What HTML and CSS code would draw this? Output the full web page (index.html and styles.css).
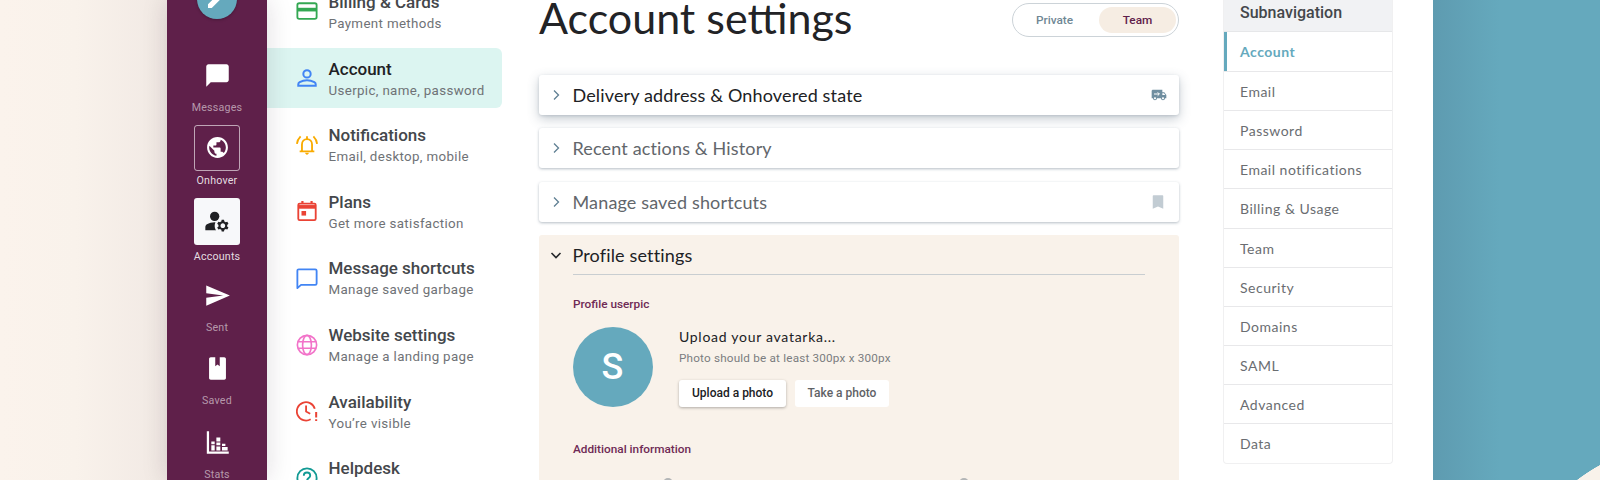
FILE: index.html
```html
<!DOCTYPE html>
<html lang="en">
<head>
    <meta charset="UTF-8">
    <meta name="viewport" content="width=device-width, initial-scale=1.0">
    <title>Account settings</title>
    <link rel="stylesheet" href="styles.css">
</head>
<body>
    <div class="backdrop"></div>

    <nav class="rail">
        <div class="fab">
            <svg viewBox="0 0 24 24" width="24" height="24"><path d="M3 17.25V21h3.75L17.81 9.94l-3.75-3.75L3 17.25zM20.71 7.04c.39-.39.39-1.02 0-1.41l-2.34-2.34c-.39-.39-1.02-.39-1.41 0l-1.83 1.83 3.75 3.75 1.83-1.83z"/></svg>
        </div>
        <div class="rail-item">
            <div class="rail-box">
                <svg viewBox="0 0 24 24" width="27" height="27"><path d="M20 2H4c-1.1 0-2 .9-2 2v18l4-4h14c1.1 0 2-.9 2-2V4c0-1.1-.9-2-2-2z"/></svg>
            </div>
            <span>Messages</span>
        </div>
        <div class="rail-item hover">
            <div class="rail-box">
                <svg viewBox="0 0 24 24" width="25" height="25"><path d="M12 2C6.48 2 2 6.48 2 12s4.48 10 10 10 10-4.48 10-10S17.52 2 12 2zm-1 17.93c-3.95-.49-7-3.85-7-7.93 0-.62.08-1.21.21-1.79L9 15v1c0 1.1.9 2 2 2v1.93zm6.9-2.54c-.26-.81-1-1.39-1.9-1.39h-1v-3c0-.55-.45-1-1-1H8v-2h2c.55 0 1-.45 1-1V7h2c1.1 0 2-.9 2-2v-.41c2.93 1.19 5 4.06 5 7.41 0 2.08-.8 3.97-2.1 5.39z"/></svg>
            </div>
            <span>Onhover</span>
        </div>
        <div class="rail-item active">
            <div class="rail-box">
                <svg viewBox="0 0 24 24" width="28" height="28"><path d="M10 12a4 4 0 1 0 0-8 4 4 0 0 0 0 8z"/><path d="M10.67 13.02C10.45 13.01 10.23 13 10 13c-2.42 0-4.68.67-6.61 1.82C2.51 15.34 2 16.32 2 17.35V20h9.26c-.79-1.13-1.26-2.51-1.26-4 0-1.07.25-2.07.67-2.98z"/><path d="M20.75 16c0-.22-.03-.42-.06-.63l1.14-1.01-1-1.73-1.45.49c-.32-.27-.68-.48-1.08-.63L18 11h-2l-.3 1.49c-.4.15-.76.36-1.08.63l-1.45-.49-1 1.73 1.14 1.01c-.03.21-.06.41-.06.63s.03.42.06.63l-1.14 1.01 1 1.73 1.45-.49c.32.27.68.48 1.08.63L16 21h2l.3-1.49c.4-.15.76-.36 1.08-.63l1.45.49 1-1.73-1.14-1.01c.03-.21.06-.41.06-.63zM17 18c-1.1 0-2-.9-2-2s.9-2 2-2 2 .9 2 2-.9 2-2 2z"/></svg>
            </div>
            <span>Accounts</span>
        </div>
        <div class="rail-item">
            <div class="rail-box">
                <svg viewBox="0 0 24 24" width="27" height="27"><path d="M2.01 21L23 12 2.01 3 2 10l15 2-15 2z"/></svg>
            </div>
            <span>Sent</span>
        </div>
        <div class="rail-item">
            <div class="rail-box">
                <svg viewBox="0 0 24 24" width="27" height="27"><path d="M6 2h4v8l2-1.6 2 1.6V2h4c.8 0 1.5.7 1.5 1.5v17c0 .8-.7 1.5-1.5 1.5H6c-.8 0-1.5-.7-1.5-1.5v-17C4.500 2.700 5.200 2 6 2z"/></svg>
            </div>
            <span>Saved</span>
        </div>
        <div class="rail-item">
            <div class="rail-box">
                <svg viewBox="0 0 24 24" width="27" height="27"><path d="M2.500 2H4.500V20H22V22H2.500zM6.500 11h3v2.500h-3zM6.500 14.500h3V19h-3zM11 7.500h3.500V11H11zM11 12h3.500v2.500H11zM11 15.500h3.500V19H11zM16 13h3v2h-3zM16 16h5v3h-5z"/></svg>
            </div>
            <span>Stats</span>
        </div>
    </nav>

    <div class="panel">
        <aside class="settings-nav">
            <a class="nav-item">
                <svg viewBox="0 0 24 24" width="24" height="24" fill="none" stroke="#34a853" stroke-width="2"><rect x="1.500" y="3.500" width="21" height="17" rx="2"/><path d="M1.500 10.500h21" stroke-width="4"/></svg>
                <div><h4>Billing &amp; Cards</h4><p>Payment methods</p></div>
            </a>
            <a class="nav-item current">
                <svg viewBox="0 0 24 24" width="24" height="24" fill="none" stroke="#4285f4" stroke-width="2.200"><circle cx="12" cy="7.500" r="4"/><path d="M2.500 20.500v-1.800c0-1 .6-1.800 1.500-2.300 2.400-1.200 5.200-1.900 8-1.900s5.600.7 8 1.900c.9.500 1.500 1.300 1.500 2.300v1.800z"/></svg>
                <div><h4>Account</h4><p>Userpic, name, password</p></div>
            </a>
            <a class="nav-item">
                <svg viewBox="0 0 24 24" width="24" height="24" fill="none" stroke="#f9ab00" stroke-width="2"><path d="M4 19h16M6.500 19v-7.500c0-3.400 2.300-6 5.500-6s5.500 2.600 5.500 6V19M5 2.500C2.800 4.700 1.300 7.500 1 10.800M19 2.500c2.200 2.200 3.700 5 4 8.300"/><path d="M10 20.500h4c0 1-.9 2.200-2 2.200s-2-1.200-2-2.200zM11 2.500h2v3h-2z" fill="#f9ab00" stroke="none"/></svg>
                <div><h4>Notifications</h4><p>Email, desktop, mobile</p></div>
            </a>
            <a class="nav-item">
                <svg viewBox="0 0 24 24" width="24" height="24" fill="none" stroke="#ea4335" stroke-width="2"><rect x="2.500" y="4" width="19" height="18" rx="1.500"/><path d="M2.500 7.500h19" stroke-width="4"/><path d="M7 1v3M17 1v3" stroke-width="2.400"/><rect x="6" y="12" width="5" height="5" fill="#ea4335" stroke="none"/></svg>
                <div><h4>Plans</h4><p>Get more satisfaction</p></div>
            </a>
            <a class="nav-item">
                <svg viewBox="0 0 24 24" width="24" height="24" fill="none" stroke="#4285f4" stroke-width="2"><path d="M3 2.500h18c.8 0 1.500.7 1.500 1.500v14c0 .8-.7 1.500-1.500 1.500H5.500L1.500 23V4c0-.8.7-1.500 1.500-1.500z" stroke-linejoin="round"/></svg>
                <div><h4>Message shortcuts</h4><p>Manage saved garbage</p></div>
            </a>
            <a class="nav-item">
                <svg viewBox="0 0 24 24" width="24" height="24" fill="none" stroke="#f273c9" stroke-width="1.800"><circle cx="12" cy="12" r="10.500"/><ellipse cx="12" cy="12" rx="4.800" ry="10.500"/><path d="M2.200 8.500h19.600M2.200 15.500h19.600"/></svg>
                <div><h4>Website settings</h4><p>Manage a landing page</p></div>
            </a>
            <a class="nav-item">
                <svg viewBox="0 0 24 24" width="24" height="24" fill="none" stroke="#ea4335" stroke-width="2"><path d="M20.500 9.500A10 10 0 1 0 16 21"/><path d="M11 6v6.500l4.500 2.500"/><path d="M22 13v6M22 21v2" stroke-width="2.200"/></svg>
                <div><h4>Availability</h4><p>You’re visible</p></div>
            </a>
            <a class="nav-item">
                <svg viewBox="0 0 24 24" width="24" height="24" fill="none" stroke="#129a94" stroke-width="2"><circle cx="12" cy="12" r="10.500"/><path d="M8.500 9.500c0-2 1.500-3.500 3.500-3.500s3.500 1.500 3.500 3.500c0 2.500-3.500 2.700-3.500 5.500M12 16.500v2"/></svg>
                <div><h4>Helpdesk</h4><p>Get some help</p></div>
            </a>
        </aside>

        <main class="content">
            <div class="page-head">
                <h1>Account settings</h1>
                <div class="switch">
                    <span class="switch-opt">Private</span>
                    <span class="switch-opt on">Team</span>
                </div>
            </div>

            <div class="card raised">
                <svg class="chev" viewBox="0 0 12 12" width="12" height="12"><path d="M4 1.500L8.500 6 4 10.500" fill="none" stroke="#5f7f93" stroke-width="1.300"/></svg>
                <span class="card-title">Delivery address &amp; Onhovered state</span>
                <svg class="card-icon" viewBox="0 0 24 24" width="16" height="16"><path fill="#6f8ea0" d="M20 8h-3V4H3c-1.100 0-2 .9-2 2v11h2c0 1.660 1.340 3 3 3s3-1.340 3-3h6c0 1.660 1.340 3 3 3s3-1.340 3-3h2v-5l-3-4zM6 18.500c-.83 0-1.500-.67-1.500-1.500s.67-1.500 1.500-1.500 1.500.67 1.500 1.500-.67 1.500-1.500 1.500zm13.500-9l1.960 2.500H17V9.500h2.500zm-1.500 9c-.83 0-1.500-.67-1.500-1.500s.67-1.500 1.500-1.500 1.500.67 1.500 1.500-.67 1.500-1.500 1.500z"/><path fill="none" stroke="#fff" stroke-width="1.500" d="M4.500 10.500h8M10 8l2.500 2.500L10 13"/></svg>
            </div>
            <div class="card">
                <svg class="chev" viewBox="0 0 12 12" width="12" height="12"><path d="M4 1.500L8.500 6 4 10.500" fill="none" stroke="#5f7f93" stroke-width="1.300"/></svg>
                <span class="card-title">Recent actions &amp; History</span>
            </div>
            <div class="card">
                <svg class="chev" viewBox="0 0 12 12" width="12" height="12"><path d="M4 1.500L8.500 6 4 10.500" fill="none" stroke="#5f7f93" stroke-width="1.300"/></svg>
                <span class="card-title">Manage saved shortcuts</span>
                <svg class="card-icon" viewBox="0 0 24 24" width="18" height="18"><path fill="#c2ccd3" d="M6 3h12c.6 0 1 .4 1 1v17l-7-3-7 3V4c0-.6.4-1 1-1z"/></svg>
            </div>

            <section class="profile">
                <div class="profile-head">
                    <svg class="chev" viewBox="0 0 12 12" width="12" height="12"><path d="M1.500 4L6 8.500 10.500 4" fill="none" stroke="#26282b" stroke-width="1.600"/></svg>
                    <span class="card-title">Profile settings</span>
                </div>
                <div class="profile-body">
                    <h5>Profile userpic</h5>
                    <div class="userpic">
                        <div class="avatar">S</div>
                        <div class="userpic-info">
                            <div class="upload-title">Upload your avatarka...</div>
                            <div class="upload-hint">Photo should be at least 300px x 300px</div>
                            <div class="upload-btns">
                                <button class="btn primary">Upload a photo</button>
                                <button class="btn">Take a photo</button>
                            </div>
                        </div>
                    </div>
                    <h5 class="extra-title">Additional information</h5>
                    <div class="extra-row">
                        <span class="dot"></span>
                        <span class="dot"></span>
                    </div>
                </div>
            </section>
        </main>

        <aside class="subnav">
            <div class="subnav-head">Subnavigation</div>
            <a class="sub-item active">Account</a>
            <a class="sub-item">Email</a>
            <a class="sub-item">Password</a>
            <a class="sub-item">Email notifications</a>
            <a class="sub-item">Billing &amp; Usage</a>
            <a class="sub-item">Team</a>
            <a class="sub-item">Security</a>
            <a class="sub-item">Domains</a>
            <a class="sub-item">SAML</a>
            <a class="sub-item">Advanced</a>
            <a class="sub-item">Data</a>
        </aside>
    </div>

    <div class="teal"></div>
</body>
</html>
```

FILE: styles.css
```css
* {
    box-sizing: border-box;
}
html, body {
    margin: 0;
    height: 480px;
    overflow: hidden;
}
body {
    display: flex;
    font-family: Roboto, Arial, sans-serif;
    color: #3c3f44;
    background-color: #fff;
}
h1, h4, h5, p {
    margin: 0;
    font-weight: normal;
}

.backdrop {
    width: 167px;
    flex: none;
    background: linear-gradient(90deg, #fbf3ec 0%, #f9f2eb 45%, #f1e9e4 100%);
}
.teal {
    width: 167px;
    flex: none;
    background:
        radial-gradient(circle 193px at 260.5px 633.5px, #f9f2ea 99.7%, rgba(249, 242, 234, 0) 100%),
        linear-gradient(90deg, #5e9bb0 0%, #65a9bd 40%);
}

/* left rail */
.rail {
    width: 100px;
    flex: none;
    background-color: #5f204a;
    box-shadow: 0 0 24px rgba(40, 20, 40, 0.15);
    position: relative;
    display: flex;
    flex-direction: column;
    align-items: center;
}
.fab {
    width: 40px;
    height: 40px;
    margin-top: -21px;
    margin-bottom: 33.3px;
    border-radius: 50%;
    background-color: #65a9bd;
    flex: none;
    display: flex;
    align-items: center;
    justify-content: center;
    box-shadow: 0 1px 3px rgba(0, 0, 0, 0.25);
}
.fab svg {
    fill: #fff;
}
.rail-item {
    height: 73.33px;
    flex: none;
    display: flex;
    flex-direction: column;
    align-items: center;
}
.rail-box {
    width: 46.67px;
    height: 46.67px;
    border-radius: 3px;
    display: flex;
    align-items: center;
    justify-content: center;
    border: 1px solid transparent;
}
.rail-box svg {
    fill: #fff;
}
.rail-item span {
    margin-top: 2px;
    font-size: 10.67px;
    line-height: 14px;
    letter-spacing: 0.2px;
    color: rgba(255, 255, 255, 0.55);
}
.rail-item.hover .rail-box {
    margin-top: -1px;
    border-color: rgba(255, 255, 255, 0.6);
}
.rail-item.hover span {
    margin-top: 3px;
    color: rgba(255, 255, 255, 0.85);
}
.rail-item.active .rail-box {
    margin-top: -1px;
    background-color: #f7f8fa;
}
.rail-item.active .rail-box svg {
    fill: #202124;
}
.rail-item.active span {
    margin-top: 5px;
    color: rgba(255, 255, 255, 0.85);
}

/* white panel */
.panel {
    flex: 1;
    display: flex;
    align-items: flex-start;
    background-color: #fff;
    height: 480px;
}

.settings-nav {
    width: 235px;
    flex: none;
    margin-top: -18.67px;
    display: flex;
    flex-direction: column;
    gap: 6.67px;
}
.nav-item {
    height: 60px;
    flex: none;
    display: flex;
    align-items: center;
    padding-left: 29px;
    gap: 10.5px;
    border-radius: 0 6px 6px 0;
}
.nav-item svg {
    width: 22px;
    height: 22px;
    flex: none;
}
.nav-item div {
    padding-top: 3px;
}
.nav-item h4 {
    font-size: 17px;
    line-height: 22px;
    font-weight: 500;
    color: #44474b;
}
.nav-item p {
    font-size: 13.33px;
    line-height: 22px;
    letter-spacing: 0.35px;
    color: #6f7276;
}
.nav-item.current {
    background-color: #dcf5f1;
}
.nav-item.current h4 {
    color: #1f2124;
}

/* main column */
.content {
    width: 640px;
    flex: none;
    margin-left: 37px;
}
.page-head {
    display: flex;
    justify-content: space-between;
    align-items: center;
    height: 34px;
    margin-top: 3px;
    margin-bottom: 38px;
}
h1 {
    font-family: Lato, sans-serif;
    font-size: 43px;
    line-height: 30px;
    margin-bottom: 4px;
    color: #222326;
}
.switch {
    width: 167px;
    height: 34px;
    padding: 3px 2px 3px 3px;
    border: 1px solid #ccd3d8;
    border-radius: 17px;
    display: flex;
    align-items: center;
    font-size: 11.8px;
    font-weight: 500;
}
.switch-opt {
    flex: 1;
    padding-right: 6px;
    text-align: center;
    color: #6f8794;
}
.switch-opt.on {
    flex: none;
    width: 77px;
    height: 26px;
    padding-right: 0;
    line-height: 26px;
    border-radius: 13px;
    background-color: #f6ede3;
    color: #5f204a;
}
.card {
    height: 40px;
    margin-bottom: 13.33px;
    padding: 0 12px 0 11px;
    display: flex;
    align-items: center;
    border-radius: 3px;
    background-color: #fff;
    box-shadow: 0 1px 3px rgba(70, 90, 110, 0.4);
}
.card.raised {
    box-shadow: 0 4px 12px rgba(70, 90, 110, 0.3), 0 1px 3px rgba(70, 90, 110, 0.2);
}
.chev {
    flex: none;
    margin-right: 10.5px;
}
.card-title {
    font-family: Lato, sans-serif;
    font-size: 18px;
    letter-spacing: 0.15px;
    color: #62666b;
}
.card.raised .card-title {
    color: #202124;
}
.card-icon {
    margin-left: auto;
}
.profile {
    background-color: #f9f2ea;
    border-radius: 3px;
    padding: 0 34px 0 11px;
    height: 300px;
}
.profile-head {
    height: 39px;
    padding-top: 2px;
    display: flex;
    align-items: center;
}
.profile-head .card-title {
    color: #202124;
}
.profile-body {
    margin-left: 23px;
    border-top: 1px solid #c9ced1;
    padding-top: 22px;
}
h5 {
    font-size: 11.8px;
    line-height: 15px;
    font-weight: 500;
    color: #6f2a55;
}
.userpic {
    display: flex;
    margin-top: 15px;
    gap: 26.5px;
}
.avatar {
    width: 80px;
    height: 80px;
    margin-left: -0.5px;
    border-radius: 50%;
    background-color: #65a9bd;
    color: #fff;
    font-size: 36px;
    font-weight: 500;
    text-align: center;
    line-height: 80px;
}
.upload-title {
    font-family: Lato, sans-serif;
    font-size: 14px;
    letter-spacing: 0.72px;
    line-height: 20px;
    color: #202124;
}
.upload-hint {
    margin-top: 3px;
    font-size: 11.7px;
    line-height: 16px;
    letter-spacing: 0.2px;
    color: #7b7d80;
}
.upload-btns {
    display: flex;
    gap: 9px;
    margin-top: 14px;
}
.btn {
    height: 27px;
    padding: 0 13px;
    border: none;
    border-radius: 3px;
    background-color: #fff;
    font-family: Roboto, Arial, sans-serif;
    font-size: 12px;
    font-weight: 500;
    color: #5f6266;
}
.btn:not(.primary) {
    padding: 0 12.5px;
}
.btn.primary {
    color: #202124;
    box-shadow: 0 1px 3px rgba(0, 0, 0, 0.3);
}
.extra-title {
    margin-top: 35px;
}
.extra-row {
    display: flex;
    margin-top: 21px;
    padding-left: 90px;
    gap: 285.5px;
}
.dot {
    width: 10px;
    height: 10px;
    border-radius: 50%;
    background-color: #b4b6b7;
}

/* right subnavigation */
.subnav {
    width: 170px;
    flex: none;
    margin-left: 44px;
    margin-top: -8px;
    border: 1.5px solid #f0f0f1;
    border-top: none;
    border-radius: 0 0 4px 4px;
    font-family: Lato, sans-serif;
}
.subnav-head {
    height: 40px;
    padding-left: 16px;
    padding-top: 1px;
    line-height: 40px;
    background-color: #f1f2f4;
    border-bottom: 1px solid #e6e7e9;
    font-family: Roboto, Arial, sans-serif;
    font-size: 16px;
    font-weight: 500;
    color: #44474b;
}
.sub-item {
    display: block;
    height: 39.15px;
    padding-left: 16px;
    line-height: 39px;
    font-size: 14px;
    letter-spacing: 0.5px;
    color: #6a6d71;
    border-bottom: 1px solid #e8e8ea;
}
.sub-item:last-child {
    border-bottom: none;
}
.sub-item.active {
    height: 40px;
    color: #65a9bd;
    font-weight: bold;
    box-shadow: inset 3px 0 0 #65a9bd;
}
```
